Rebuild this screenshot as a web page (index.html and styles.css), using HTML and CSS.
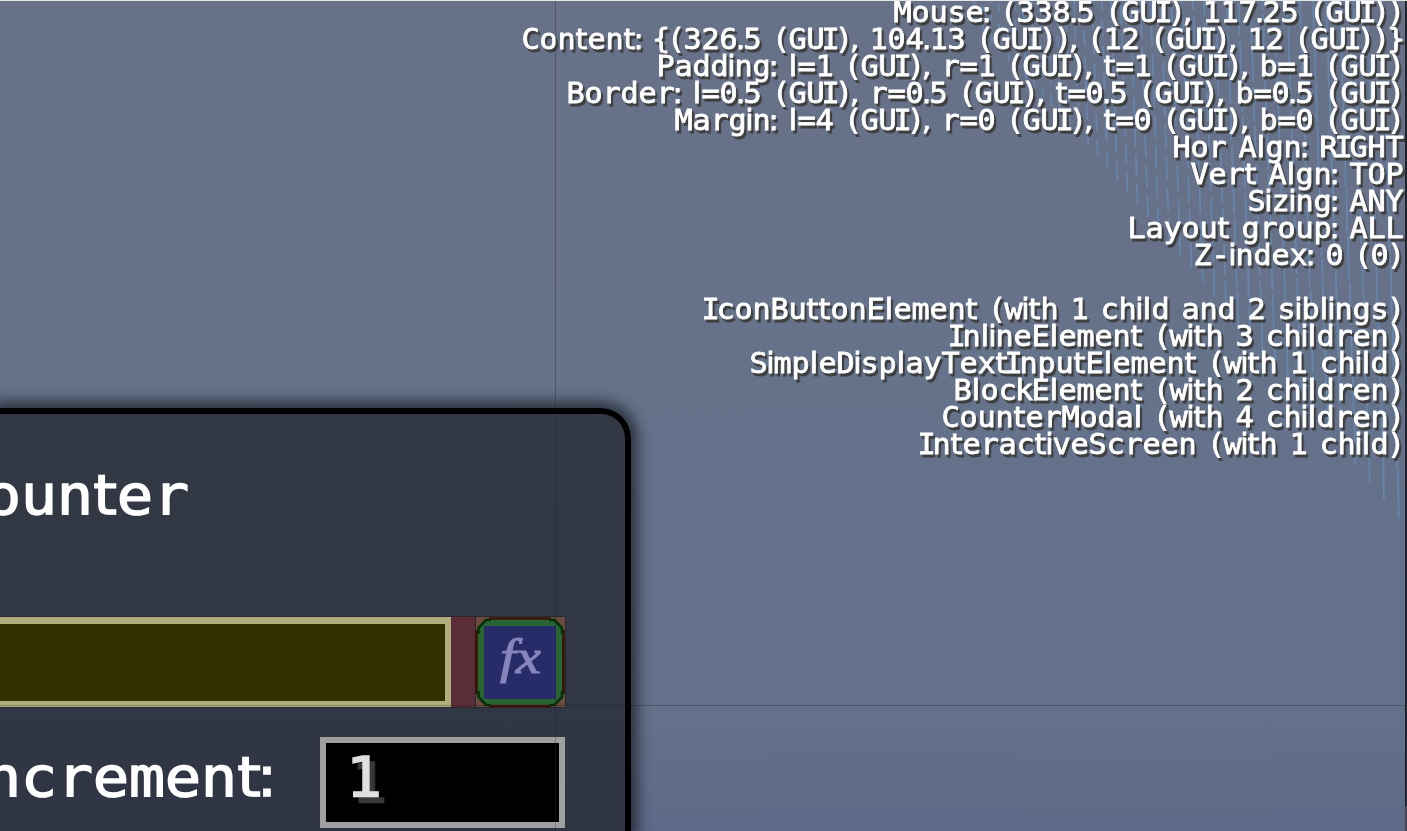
FILE: index.html
```html
<!DOCTYPE html>
<html lang="en">
<head>
<meta charset="utf-8">
<title>Counter</title>
<link rel="stylesheet" href="styles.css">
</head>
<body>
<main class="screen">
  <svg class="rain" width="1407" height="831" aria-hidden="true"></svg>
  <section class="modal">
    <header class="heading"><svg class="big"><text data-unit="6" data-x="-12" y="99.7">ounter</text></svg></header>
    <div class="field-row">
      <div class="text-input"></div>
      <div class="gap"></div>
      <div class="fx-button">
        <svg width="91" height="92" viewBox="475 616 91 92">
          <rect x="475" y="616" width="91" height="92" fill="#272a34"/>
          <rect x="476" y="617" width="89" height="90" fill="#6b4a40"/>
          <path d="M489 618.500H551M489 706H551M476.500 630V694M563.500 630V694" stroke="#351500" stroke-width="2.600"/>
          <path d="M484 620H556L562 627V698L556 704.500H484L478 698V627Z" fill="#286535"/>
          <path d="M478.500 634V628L486 620H491M549 620H554.500L562 628V634M478.500 691V697L486 705H491M549 705H554.500L562 697V691" fill="none" stroke="#053008" stroke-width="2.600"/>
          <rect x="484" y="626" width="72" height="73" fill="#272b68"/>
          <text class="fx" transform="translate(500 673) scale(1.18 1)">fx</text>
        </svg>
      </div>
    </div>
    <div class="increment-row">
      <svg class="label"><text data-unit="6" data-x="-12" y="58.7">ncrement:</text></svg>
      <div class="number-input"><svg class="value"><text data-unit="6" data-x="23" y="53">1</text></svg></div>
    </div>
  </section>
  <aside class="debug">
    <svg><text data-unit="3">Mouse: (338.5 (GUI), 117.25 (GUI))</text></svg>
    <svg><text data-unit="3">Content: {(326.5 (GUI), 104.13 (GUI)), (12 (GUI), 12 (GUI))}</text></svg>
    <svg><text data-unit="3">Padding: l=1 (GUI), r=1 (GUI), t=1 (GUI), b=1 (GUI)</text></svg>
    <svg><text data-unit="3">Border: l=0.5 (GUI), r=0.5 (GUI), t=0.5 (GUI), b=0.5 (GUI)</text></svg>
    <svg><text data-unit="3">Margin: l=4 (GUI), r=0 (GUI), t=0 (GUI), b=0 (GUI)</text></svg>
    <svg><text data-unit="3">Hor Algn: RIGHT</text></svg>
    <svg><text data-unit="3">Vert Algn: TOP</text></svg>
    <svg><text data-unit="3">Sizing: ANY</text></svg>
    <svg><text data-unit="3">Layout group: ALL</text></svg>
    <svg class="group-end"><text data-unit="3">Z-index: 0 (0)</text></svg>
    <svg><text data-unit="3">IconButtonElement (with 1 child and 2 siblings)</text></svg>
    <svg><text data-unit="3">InlineElement (with 3 children)</text></svg>
    <svg><text data-unit="3">SimpleDisplayTextInputElement (with 1 child)</text></svg>
    <svg><text data-unit="3">BlockElement (with 2 children)</text></svg>
    <svg><text data-unit="3">CounterModal (with 4 children)</text></svg>
    <svg><text data-unit="3">InteractiveScreen (with 1 child)</text></svg>
  </aside>
  <div class="guide-v"></div><div class="guide-h"></div>
  <div class="edge-top"></div><div class="edge-right"></div>
</main>
<script src="main.js"></script>
</body>
</html>
```
FILE: styles.css
```css
* { box-sizing: border-box; }
body { margin: 0; overflow: hidden; }
.screen {
  position: relative;
  width: 1407px;
  height: 831px;
  overflow: hidden;
  display: flex;
  align-items: flex-end;
  background: linear-gradient(#677289 0, #67728a 290px, #64738a 375px, #65718b 450px, #63718a 720px, #5e6989 831px);
}
.rain { position: absolute; inset: 0; }
.rain path { fill: none; stroke: #6895c7; stroke-width: 1.8; opacity: .55; }
text {
  font-family: "DejaVu Sans Mono", monospace;
  fill: #fff;
  stroke: #fff;
  text-anchor: middle;
  font-size: 28px;
  stroke-width: .75px;
}
.narrow { font-family: "DejaVu Sans", sans-serif; }
.modal {
  position: relative;
  width: 631px;
  height: 423px;
  padding-top: 202px;
  border: 6px solid #000;
  border-width: 6px 6px 0 0;
  border-radius: 0 30px 0 0;
  background: linear-gradient(#333944, #323843 180px, #303545);
  box-shadow: 0 0 13px 7px rgba(0, 0, 0, .55);
}
.heading { position: absolute; left: 0; top: 0; }
.heading svg { display: block; width: 300px; height: 130px; }
.heading text, .label text, .value text { font-size: 56px; stroke-width: 1.3px; }
.field-row { display: flex; height: 92px; }
.text-input {
  width: 451px;
  height: 90px;
  margin: 1px 0;
  border: 6px solid #b0af7b;
  border-left: 0;
  border-top-width: 7px;
  box-shadow: 0 -1px #292c37, 0 1px #292c37;
  background: #333000;
}
.gap { width: 24px; background: #5b2d38; border: solid #33212c; border-width: 1px 0; }
.fx-button { width: 91px; height: 92px; }
.fx-button svg { display: block; }
.fx { font: italic 48px "Liberation Serif", serif; fill: #8785bc; stroke: #8785bc; stroke-width: 1.1px; text-anchor: start; }
.increment-row { display: flex; height: 91px; margin-top: 29px; }
.label { flex: none; width: 320px; height: 90px; }
.number-input { flex: none; width: 245px; height: 91px; border: 6px solid #a0a0a0; background: #000; }
.value { display: block; width: 220px; height: 76px; }
.value text { fill: #e0e0e0; stroke: #e0e0e0; filter: drop-shadow(5.500px 6px 0 #383838); }
.debug { position: absolute; top: -1px; right: 1px; width: 1000px; display: flex; flex-direction: column; }
.debug svg { flex: none; width: 1000px; height: 27px; overflow: visible; }
.debug text { filter: drop-shadow(2.800px 3px 0 #3e3e3e); }
.group-end { margin-bottom: 27px; }
.guide-v { position: absolute; left: 555px; top: 0; width: 1px; height: 831px; background: rgba(20, 25, 35, .3); }
.guide-h { position: absolute; left: 0; top: 705px; width: 1405px; height: 1px; background: rgba(20, 25, 35, .3); }
.edge-top { position: absolute; left: 0; top: 0; width: 1407px; height: 1px; background: #e4e6e6; }
.edge-right { position: absolute; right: 0; top: 1px; width: 2px; height: 830px; background: linear-gradient(#1e232d 804px, #454a55 806px); }
```
FILE: main.js
```javascript
// Advance width of each glyph, in font units.
const advances = { ' ': 4, '(': 5, ')': 5, '{': 5, '}': 5, ',': 2, '.': 2, ':': 2, i: 2, l: 3, t: 4, I: 4, k: 5, f: 5 };
const narrow = 'ilt,.:';
const stretch = 1.08;
const ns = 'http://www.w3.org/2000/svg';

document.querySelectorAll('text[data-unit]').forEach(el => {
  const unit = Number(el.dataset.unit);
  const chars = [...el.textContent];
  const width = chars.reduce((sum, c) => sum + (advances[c] || 6) * unit, 0);
  let x = el.dataset.x ? Number(el.dataset.x) : 999 - width;
  if (!el.dataset.x) el.setAttribute('y', 22.7);
  const runs = [];
  chars.forEach(c => {
    const slim = narrow.includes(c);
    const adv = (advances[c] || 6) * unit;
    let run = runs[runs.length - 1];
    if (!run || run.slim !== slim) runs.push(run = { slim, s: '', xs: [] });
    run.s += c;
    run.xs.push(((x + (adv - unit) / 2) / stretch).toFixed(2));
    x += adv;
  });
  el.setAttribute('transform', `scale(${stretch} 1)`);
  el.style.whiteSpace = 'pre';
  el.textContent = '';
  runs.forEach(run => {
    const span = document.createElementNS(ns, 'tspan');
    if (run.slim) span.setAttribute('class', 'narrow');
    span.setAttribute('x', run.xs.join(' '));
    span.textContent = run.s;
    el.appendChild(span);
  });
});

// Rain streaks, longer and denser toward the right edge.
let d = '';
let x = 975;
let i = 0;
while (x < 1403) {
  const t = Math.max(0, (x - 1030) / 370);
  const end = x < 1080 ? 20 + (x - 970) * 1.05 : 135 + (x - 1080) * 1.2;
  // Dashes are laid from the lower tip upward.
  const len = 9 + 40 * t;
  const gap = Math.max(2, 11 - 10 * t);
  for (let y = end; y > -len; y -= len + gap) {
    const lean = (y - end) * 0.035;
    d += `M${(x + lean).toFixed(1)} ${y.toFixed(1)}l-.8 ${-len.toFixed(1)}`;
  }
  x += 8.5 + 6.5 * t;
  i++;
}
const path = document.createElementNS(ns, 'path');
path.setAttribute('d', d);
document.querySelector('.rain').appendChild(path);
```
